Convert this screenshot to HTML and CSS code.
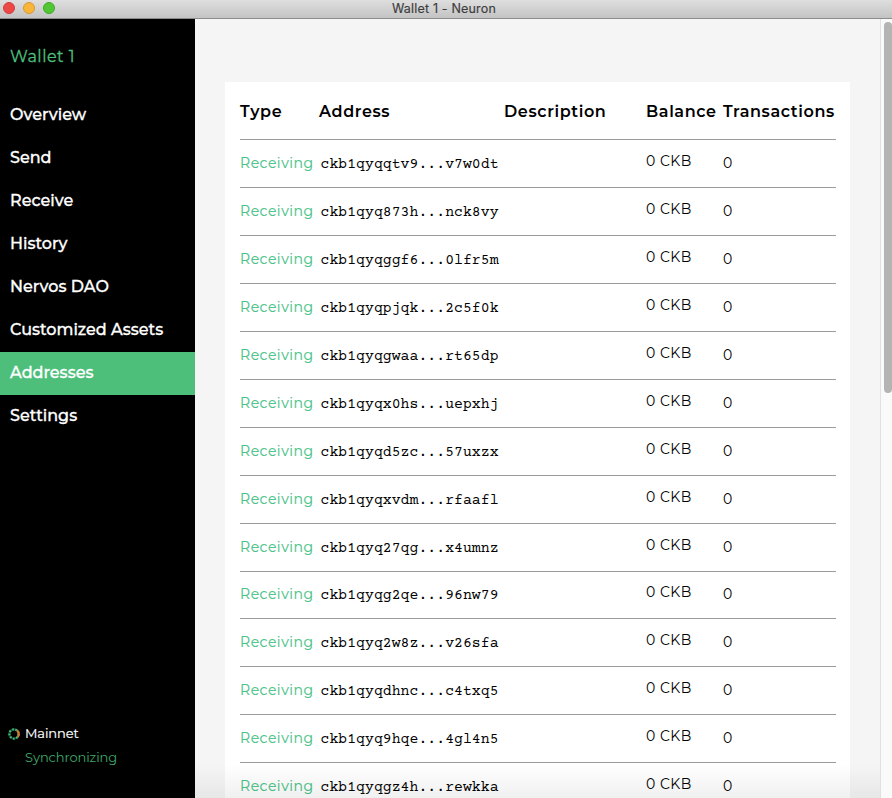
FILE: index.html
```html
<!DOCTYPE html>
<html lang="en">
<head>
<meta charset="utf-8">
<title>Wallet 1 - Neuron</title>
<link rel="stylesheet" href="styles.css">
</head>
<body>
<header class="titlebar">
  <div class="lights"><i class="light red"></i><i class="light yellow"></i><i class="light green"></i></div>
  <span class="window-title">Wallet 1 - Neuron</span>
</header>
<div class="app">
  <aside class="sidebar">
    <div class="wallet">Wallet 1</div>
    <nav class="nav">
      <a>Overview</a>
      <a>Send</a>
      <a>Receive</a>
      <a>History</a>
      <a>Nervos DAO</a>
      <a>Customized Assets</a>
      <a class="active">Addresses</a>
      <a>Settings</a>
    </nav>
    <div class="network">
      <svg class="spinner" viewBox="0 0 12 12" width="12" height="12">
        <circle cx="6" cy="6" r="4.6" fill="none" stroke="#14492f" stroke-width="2.4"/>
        <circle cx="6" cy="6" r="4.6" fill="none" stroke="#45b87b" stroke-width="2.2" stroke-dasharray="1.7 1.51"/>
        <path d="M9 2.4A4.7 4.7 0 0 1 9.6 9" fill="none" stroke="#d4752c" stroke-width="2.3"/>
      </svg>
      <span class="net-name">Mainnet</span>
      <span class="sync">Synchronizing</span>
    </div>
  </aside>
  <main class="content">
    <section class="card">
      <div class="row head">
        <span>Type</span><span>Address</span><span>Description</span><span>Balance</span><span>Transactions</span>
      </div>
      <div class="row"><span class="type">Receiving</span><span class="addr">ckb1qyqqtv9...v7w0dt</span><span></span><span class="balance">0 CKB</span><span class="count">0</span></div>
      <div class="row"><span class="type">Receiving</span><span class="addr">ckb1qyq873h...nck8vy</span><span></span><span class="balance">0 CKB</span><span class="count">0</span></div>
      <div class="row"><span class="type">Receiving</span><span class="addr">ckb1qyqggf6...0lfr5m</span><span></span><span class="balance">0 CKB</span><span class="count">0</span></div>
      <div class="row"><span class="type">Receiving</span><span class="addr">ckb1qyqpjqk...2c5f0k</span><span></span><span class="balance">0 CKB</span><span class="count">0</span></div>
      <div class="row"><span class="type">Receiving</span><span class="addr">ckb1qyqgwaa...rt65dp</span><span></span><span class="balance">0 CKB</span><span class="count">0</span></div>
      <div class="row"><span class="type">Receiving</span><span class="addr">ckb1qyqx0hs...uepxhj</span><span></span><span class="balance">0 CKB</span><span class="count">0</span></div>
      <div class="row"><span class="type">Receiving</span><span class="addr">ckb1qyqd5zc...57uxzx</span><span></span><span class="balance">0 CKB</span><span class="count">0</span></div>
      <div class="row"><span class="type">Receiving</span><span class="addr">ckb1qyqxvdm...rfaafl</span><span></span><span class="balance">0 CKB</span><span class="count">0</span></div>
      <div class="row"><span class="type">Receiving</span><span class="addr">ckb1qyq27qg...x4umnz</span><span></span><span class="balance">0 CKB</span><span class="count">0</span></div>
      <div class="row tight"><span class="type">Receiving</span><span class="addr">ckb1qyqg2qe...96nw79</span><span></span><span class="balance">0 CKB</span><span class="count">0</span></div>
      <div class="row"><span class="type">Receiving</span><span class="addr">ckb1qyq2w8z...v26sfa</span><span></span><span class="balance">0 CKB</span><span class="count">0</span></div>
      <div class="row"><span class="type">Receiving</span><span class="addr">ckb1qyqdhnc...c4txq5</span><span></span><span class="balance">0 CKB</span><span class="count">0</span></div>
      <div class="row"><span class="type">Receiving</span><span class="addr">ckb1qyq9hqe...4gl4n5</span><span></span><span class="balance">0 CKB</span><span class="count">0</span></div>
      <div class="row"><span class="type">Receiving</span><span class="addr">ckb1qyqgz4h...rewkka</span><span></span><span class="balance">0 CKB</span><span class="count">0</span></div>
    </section>
    <div class="fade"></div>
  </main>
  <div class="scrollbar"><div class="thumb"></div></div>
</div>
</body>
</html>
```

FILE: styles.css
```css
* { box-sizing: border-box; }
body {
  margin: 0;
  height: 798px;
  overflow: hidden;
  display: flex;
  flex-direction: column;
  font-family: Montserrat, Inter, sans-serif;
  color: #000;
  background: #f5f5f5;
}
.titlebar {
  height: 19px;
  flex: none;
  display: grid;
  grid-template-columns: 195px 1fr 195px;
  background: linear-gradient(#dedede, #c3c3c3);
  border-bottom: 1px solid #8c8c8c;
}
.lights { display: flex; gap: 8px; padding: 2px 0 0 3px; }
.light { width: 12px; height: 12px; border-radius: 50%; border: 1px solid; }
.red { background: #ec4845; border-color: #d53d3b; }
.yellow { background: #f8b53a; border-color: #dc982d; }
.green { background: #52c634; border-color: #3fa928; }
.window-title {
  font: 400 12.5px/17px Inter, sans-serif;
  text-align: center;
  color: #3c3c3c;
  letter-spacing: 0.18px;
  padding-right: 4px;
  -webkit-text-stroke: 0.15px #3c3c3c;
}
.app { flex: 1; min-height: 0; display: flex; }
.sidebar {
  width: 195px;
  flex: none;
  background: #000;
  display: flex;
  flex-direction: column;
  white-space: nowrap;
}
.wallet { padding: 26px 0 0 10px; height: 75px; font-size: 16px; line-height: 24px; color: #4dbf7b; letter-spacing: 0.5px; -webkit-text-stroke: 0.3px #4dbf7b; }
.nav a {
  display: block;
  height: 43px;
  padding-left: 10px;
  line-height: 41px;
  font-size: 16px;
  font-weight: 500;
  color: #fff;
  -webkit-text-stroke: 0.3px #fff;
}
.nav .active { background: #4dbf7b; }
.network {
  margin-top: auto;
  height: 75px;
  padding-left: 8px;
  display: grid;
  grid-template-columns: 17px auto;
  grid-template-rows: 22px 24px;
  align-items: center;
  font-size: 13px;
}
.spinner { display: block; }
.net-name { color: #fff; margin-top: -2px; letter-spacing: -0.1px; -webkit-text-stroke: 0.2px #fff; }
.sync { grid-column: 2; color: #3fa86b; letter-spacing: -0.08px; }
.content { flex: 1; position: relative; padding: 63px 30px 0; overflow: hidden; }
.card { width: 625px; background: #fff; padding: 0 14px 0 15px; }
.row {
  height: 48px;
  display: grid;
  grid-template-columns: 79px 185px 142px 77px 113px;
  border-bottom: 1px solid #9b9b9b;
  white-space: nowrap;
  font-size: 14px;
  line-height: 46px;
}
.tight { height: 47px; line-height: 44px; }
.head { height: 58px; font-size: 16px; line-height: 60px; font-weight: 600; letter-spacing: 0.62px; }
.type { color: #4ac388; letter-spacing: 0.52px; -webkit-text-stroke: 0.15px #4ac388; }
.addr { padding: 2px 0 0 1.5px; font-family: "Courier Prime", "Liberation Mono", monospace; font-size: 14.8px; letter-spacing: 0.03px; }
.balance { margin-top: -2px; letter-spacing: 0.5px; }
.fade {
  position: absolute;
  left: 0; right: 0; bottom: 0;
  height: 34px;
  background: linear-gradient(rgba(0,0,0,0), rgba(0,0,0,.06));
}
.scrollbar { width: 12px; flex: none; background: #fafafa; border-left: 1px solid #e1e1e1; padding: 3px 0 0 3px; overflow: hidden; }
.thumb { width: 8px; height: 371px; border-radius: 4px; background: #b4b4b4; }
```
